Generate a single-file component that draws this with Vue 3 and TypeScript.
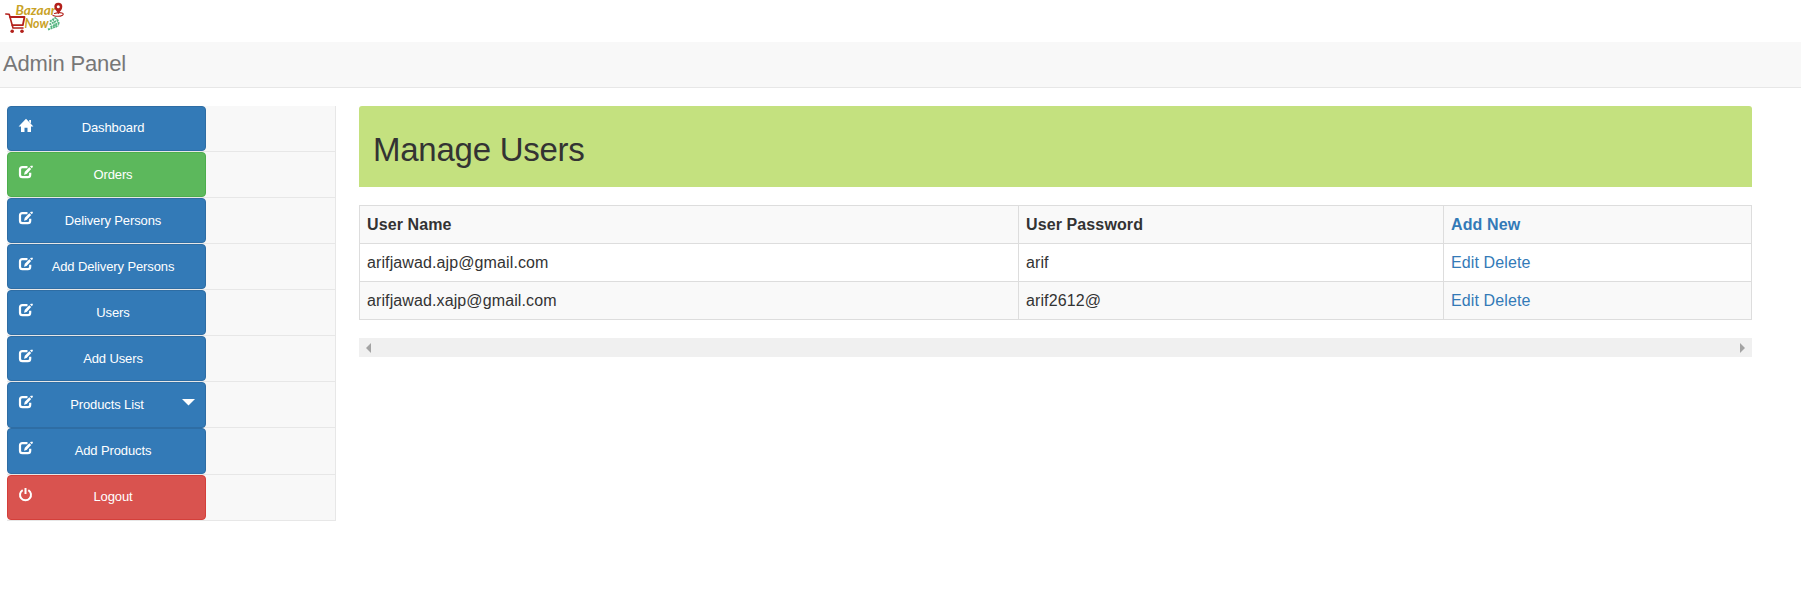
<script setup lang="ts">
type Icon = 'home' | 'edit' | 'power'

interface MenuItem {
  label: string
  icon: Icon
  tone?: 'success' | 'danger'
  kind?: 'dropdown' | 'tall' | 'first' | 'last'
}

const menu: MenuItem[] = [
  { label: 'Dashboard', icon: 'home', kind: 'first' },
  { label: 'Orders', icon: 'edit', tone: 'success' },
  { label: 'Delivery Persons', icon: 'edit' },
  { label: 'Add Delivery Persons', icon: 'edit' },
  { label: 'Users', icon: 'edit' },
  { label: 'Add Users', icon: 'edit' },
  { label: 'Products List', icon: 'edit', kind: 'dropdown' },
  { label: 'Add Products', icon: 'edit', kind: 'tall' },
  { label: 'Logout', icon: 'power', tone: 'danger', kind: 'last' },
]

const users = [
  { name: 'arifjawad.ajp@gmail.com', password: 'arif' },
  { name: 'arifjawad.xajp@gmail.com', password: 'arif2612@' },
]
</script>

<template>
  <div class="page">
    <header class="brand">
      <svg class="logo" viewBox="0 0 70 36" width="70" height="36" aria-label="Bazaar Now">
        <g fill="none" stroke="#b3201b" stroke-linecap="round" stroke-linejoin="round">
          <path d="M5.8 14 L9.2 14.3 L13 28 H23" stroke-width="1.6" />
          <path d="M10 17 H24.5 L22.8 25.2 H12.3" stroke-width="1.8" />
          <path d="M54.5 13.5 C61 11.5 65 13.5 62.5 15.2 C60 16.6 56 16.4 53 15.4" stroke-width="1.1" />
        </g>
        <circle cx="12.2" cy="31.2" r="1.8" fill="#b3201b" />
        <circle cx="22" cy="31.2" r="1.8" fill="#b3201b" />
        <g fill="none" stroke="#55b681" stroke-width="1.9" stroke-dasharray="2 .7">
          <path d="M50 21.5 L56 17.5 M49.5 24.5 L59 19.5 M50.5 27 L59.5 22.5 M48 29.5 L58.5 25.5" />
          <path d="M53 19 L56 27.5 M56.5 18 L59 25.5" stroke-width="1" />
        </g>
        <text class="script" x="15.5" y="14.8" textLength="40" lengthAdjust="spacingAndGlyphs">Bazaar</text>
        <text class="script" x="24.5" y="28" textLength="24" lengthAdjust="spacingAndGlyphs">Now</text>
        <path d="M58.5 14.2 C57 11.2 54.3 9.5 54.3 6.8 A4 4 0 0 1 62.3 6.8 C62.3 9.6 60 11.2 58.5 14.2 Z" fill="#b3201b" />
        <circle cx="58.3" cy="6.8" r="1.5" fill="#fff" />
      </svg>
    </header>
    <div class="navbar">Admin Panel</div>

    <div class="body">
      <nav class="sidebar">
        <div v-for="item in menu" :key="item.label" class="row" :class="item.kind">
          <a class="btn" :class="item.tone">
            <svg class="icon" viewBox="0 0 16 16" width="16" height="16" fill="currentColor">
              <path v-if="item.icon === 'home'" d="M8 .8 L15.4 8.4 H13 V14 H9.5 V9.8 H6.5 V14 H3 V8.4 H.6 Z M11.2 2 H13 V5.6 L11.2 3.8 Z" />
              <template v-else-if="item.icon === 'edit'">
                <path d="M9.5 3.2 H4.4 Q2 3.2 2 5.6 V10.8 Q2 13.2 4.4 13.2 H9.8 Q12.2 13.2 12.2 10.8 V8.8" fill="none" stroke="currentColor" stroke-width="2.2" />
                <path d="M6 10.8 L6.8 7.7 L11.3 3.3 L13.2 5.1 L8.6 9.9 Z M12 2.5 L12.9 1.7 H14.8 V3 L13.8 4.3 Z" />
              </template>
              <template v-else>
                <path d="M4.7 3.1 A5.5 5.5 0 1 0 10.3 3.1" fill="none" stroke="currentColor" stroke-width="2" />
                <path d="M6.5 1 H8.5 V7 H6.5 Z" />
              </template>
            </svg>
            <span class="label">{{ item.label }}</span>
            <svg v-if="item.kind === 'dropdown'" class="caret" viewBox="0 0 13 7" width="13" height="7">
              <path d="M0 0 H13 L6.5 6.5 Z" fill="currentColor" />
            </svg>
          </a>
        </div>
      </nav>

      <main class="content">
        <h1 class="title">Manage Users</h1>
        <table class="users">
          <colgroup>
            <col class="c-name" />
            <col class="c-pass" />
            <col />
          </colgroup>
          <tbody>
            <tr>
              <th>User Name</th>
              <th>User Password</th>
              <th><a>Add New</a></th>
            </tr>
            <tr v-for="user in users" :key="user.name">
              <td>{{ user.name }}</td>
              <td>{{ user.password }}</td>
              <td><a>Edit</a> <a>Delete</a></td>
            </tr>
          </tbody>
        </table>
        <div class="scrollbar">
          <svg viewBox="0 0 5 10" width="5" height="10"><path d="M5 0 V10 L0 5 Z" /></svg>
          <svg viewBox="0 0 5 10" width="5" height="10"><path d="M0 0 V10 L5 5 Z" /></svg>
        </div>
      </main>
    </div>
  </div>
</template>

<style>
body {
  background: #fff;
}
</style>

<style scoped>
.page {
  height: 613px;
  overflow: hidden;
  color: #333;
  font-family: "Liberation Sans", Arial, sans-serif;
  font-size: 16px;
}
.page * {
  box-sizing: border-box;
}
.brand {
  height: 42px;
}
.logo {
  display: block;
}
.script {
  font: italic 700 13px Lato, sans-serif;
  fill: #c9a227;
}
.navbar {
  height: 46px;
  padding-left: 3px;
  background: #f8f8f8;
  border-bottom: 1px solid #e7e7e7;
  color: #777;
  font-size: 22px;
  letter-spacing: -0.16px;
  line-height: 44px;
}
.body {
  display: flex;
  padding: 18px 49px 0 7px;
}
.sidebar {
  width: 329px;
  flex: none;
  background: #f8f8f8;
  border-right: 1px solid #e7e7e7;
}
.row {
  height: 46px;
  border-bottom: 1px solid #e7e7e7;
}
.row.tall {
  height: 47px;
}
.btn {
  display: flex;
  position: relative;
  width: 199px;
  height: 45px;
  padding: 0 10px;
  border: 1px solid #2e6da4;
  border-radius: 4px;
  background: #337ab7;
  color: #fff;
  font-size: 13px;
}
.dropdown .btn,
.tall .btn {
  height: 46px;
}
.btn.success {
  background: #5cb85c;
  border-color: #4cae4c;
}
.btn.danger {
  background: #d9534f;
  border-color: #d43f3a;
}
.icon {
  flex: none;
  margin-top: 11px;
}
.label {
  width: 158px;
  flex: none;
  text-align: center;
  letter-spacing: -0.12px;
  line-height: 43px;
}
.first .label,
.last .label {
  line-height: 41px;
}
.dropdown .label {
  width: 146px;
}
.caret {
  position: absolute;
  right: 10px;
  top: 16px;
}
.content {
  flex: 1;
  margin-left: 23px;
}
.title {
  height: 81px;
  margin: 0 0 18px;
  padding-left: 14px;
  border-radius: 3px 3px 0 0;
  background: #c4e17f;
  font-size: 33px;
  font-weight: 400;
  letter-spacing: -0.25px;
  line-height: 88px;
}
.users {
  width: 100%;
  height: 115px;
  table-layout: fixed;
  border-collapse: collapse;
}
.c-name {
  width: 659px;
}
.c-pass {
  width: 425px;
}
.users tr:nth-child(odd) {
  background: #f9f9f9;
}
.users th,
.users td {
  height: 38px;
  padding: 0 7px;
  border: 1px solid #ddd;
  text-align: left;
  letter-spacing: 0.11px;
  line-height: 22px;
}
.users a {
  color: #337ab7;
}
.scrollbar {
  display: flex;
  align-items: center;
  justify-content: space-between;
  height: 19px;
  margin-top: 18px;
  padding: 0 7px;
  background: #f0f0f0;
  fill: #a3a3a3;
}
</style>
